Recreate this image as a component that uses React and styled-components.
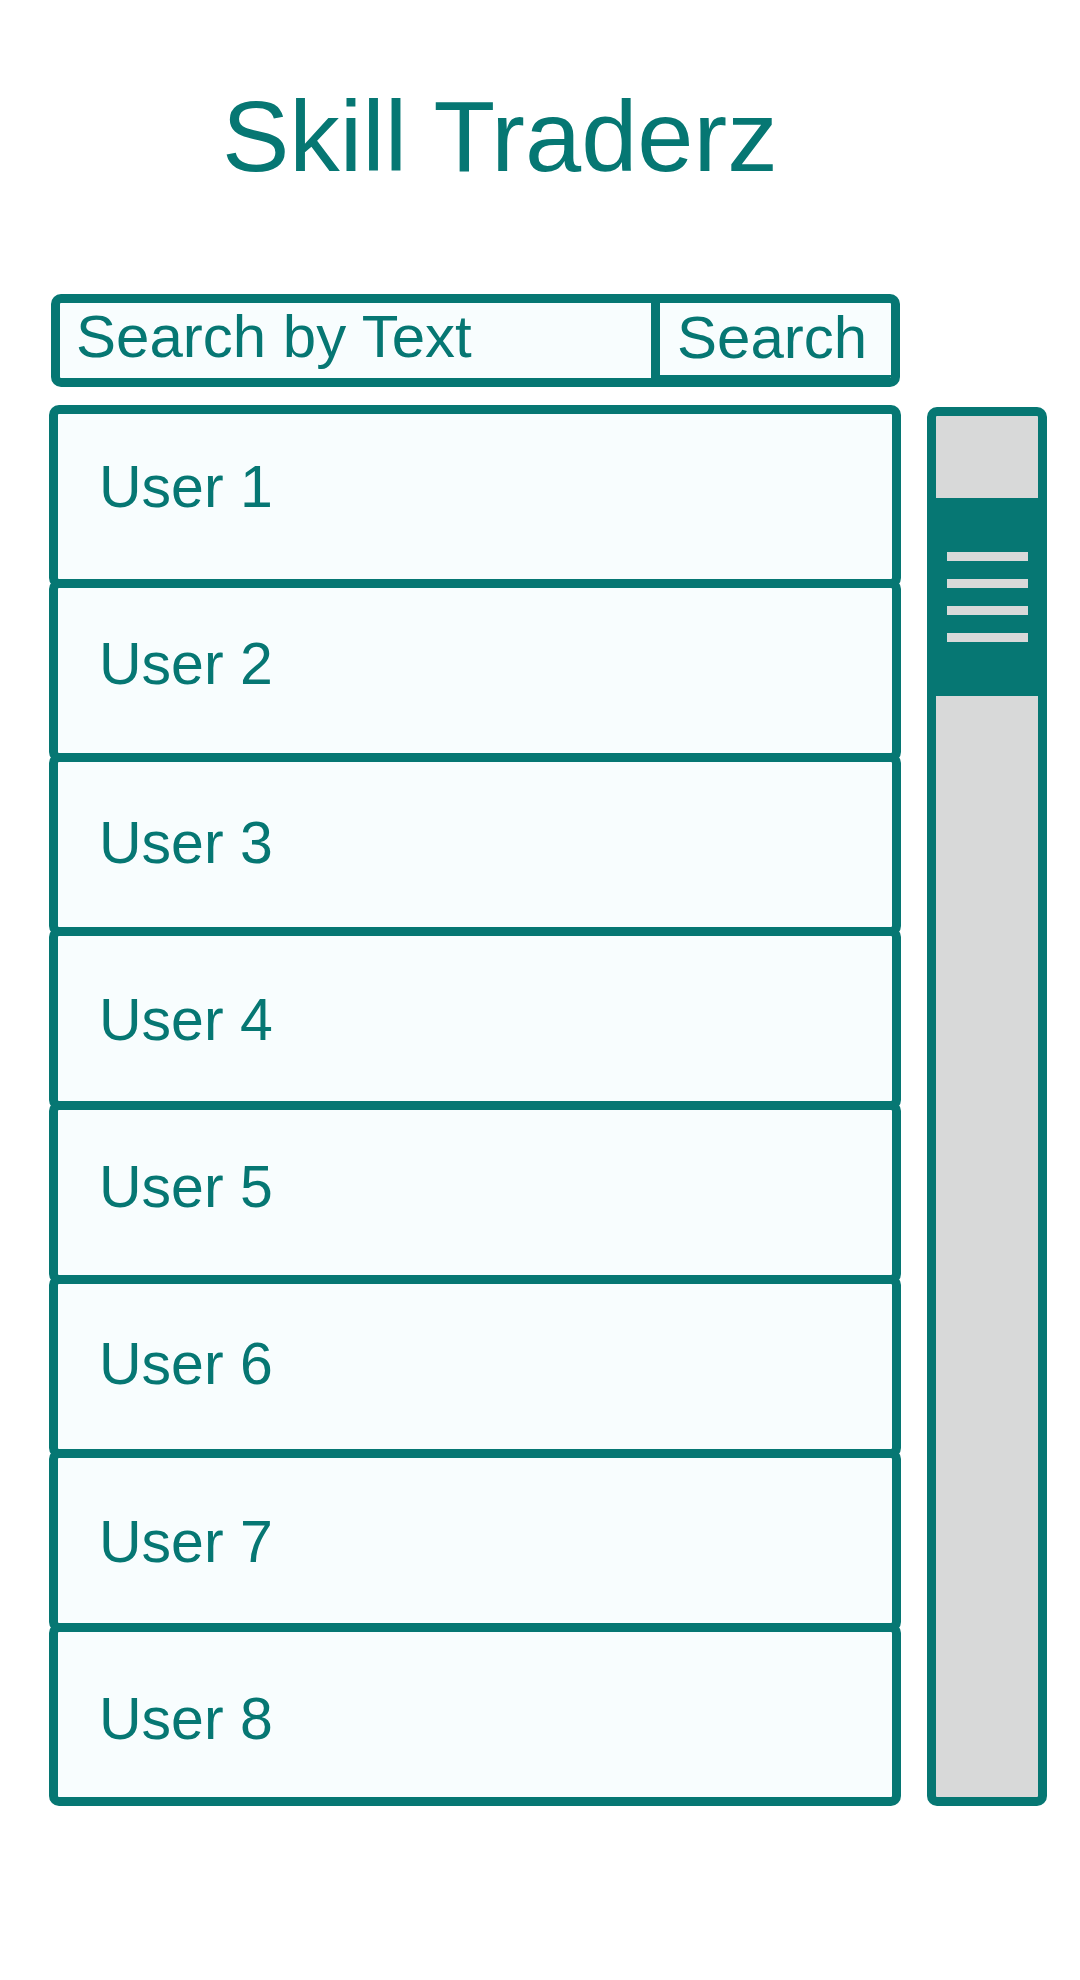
import React from "react";
import styled, { createGlobalStyle } from "styled-components";

const TEAL = "#067773";
const PANEL = "#f8fdfe";
const TRACK = "#d8d9d9";

const GlobalStyle = createGlobalStyle`
  html, body { margin: 0; padding: 0; background: #ffffff; }
  body { font-family: "Liberation Sans", Arial, sans-serif; color: ${TEAL}; }
  * { box-sizing: border-box; }
`;

const Page = styled.div`
  width: 1080px;
  min-height: 1980px;
  padding-top: 86px;
  display: flex;
  flex-direction: column;
`;

const Title = styled.h1`
  margin: 0;
  padding-left: 222px;
  font-size: 101px;
  line-height: 100px;
  font-weight: 400;
  color: ${TEAL};
`;

const SearchBar = styled.form`
  margin: 108px 0 0 51px;
  width: 849px;
  height: 93px;
  border: 9px solid ${TEAL};
  border-radius: 10px;
  background: ${PANEL};
  display: flex;
  overflow: hidden;
`;

const SearchInput = styled.input`
  flex: 1;
  min-width: 0;
  height: 100%;
  border: none;
  outline: none;
  background: transparent;
  padding: 0 0 8px 16px;
  font-family: "Liberation Sans", Arial, sans-serif;
  font-size: 60px;
  color: ${TEAL};
  &::placeholder { color: ${TEAL}; opacity: 1; }
`;

const SearchButton = styled.button`
  width: 240px;
  height: 100%;
  border: none;
  border-left: 9px solid ${TEAL};
  border-bottom: 3px solid ${TEAL};
  background: transparent;
  padding: 0 0 10px 17px;
  text-align: left;
  font-family: "Liberation Sans", Arial, sans-serif;
  font-size: 60px;
  color: ${TEAL};
  cursor: pointer;
`;

const Body = styled.div`
  margin: 18px 0 0 49px;
  display: flex;
  gap: 26px;
  align-items: stretch;
`;

const List = styled.ul`
  list-style: none;
  margin: 0;
  padding: 0;
  width: 852px;
  display: flex;
  flex-direction: column;
`;

const Row = styled.li`
  position: relative;
  height: 183px;
  border: 9px solid ${TEAL};
  border-radius: 10px;
  background: ${PANEL};
  & + & { margin-top: -9px; }
`;

const UserName = styled.span`
  display: block;
  padding: ${(p) => p.$top}px 0 0 41px;
  font-size: 59px;
  line-height: 58px;
  color: ${TEAL};
`;

const Scrollbar = styled.div`
  position: relative;
  width: 120px;
  margin-top: 2px;
  border: 9px solid ${TEAL};
  border-radius: 10px;
  background: ${TRACK};
`;

const Thumb = styled.div`
  position: absolute;
  left: -9px;
  right: -9px;
  height: 198px;
  background: ${TEAL};
  display: flex;
  flex-direction: column;
  align-items: center;
  justify-content: center;
  gap: 18px;
`;

const Grip = styled.span`
  display: block;
  width: 81px;
  height: 9px;
  background: ${TRACK};
`;

const users = [
  { name: "User 1", top: 44 },
  { name: "User 2", top: 47 },
  { name: "User 3", top: 52 },
  { name: "User 4", top: 55 },
  { name: "User 5", top: 48 },
  { name: "User 6", top: 51 },
  { name: "User 7", top: 55 },
  { name: "User 8", top: 58 },
];

export default function App() {
  return (
    <>
      <GlobalStyle />
      <Page>
        <Title>Skill Traderz</Title>
        <SearchBar onSubmit={(e) => e.preventDefault()}>
          <SearchInput type="text" placeholder="Search by Text" />
          <SearchButton type="submit">Search</SearchButton>
        </SearchBar>
        <Body>
          <List>
            {users.map((u) => (
              <Row key={u.name}>
                <UserName $top={u.top}>{u.name}</UserName>
              </Row>
            ))}
          </List>
          <Scrollbar>
            <Thumb style={{ top: 82 }}>
              <Grip />
              <Grip />
              <Grip />
              <Grip />
            </Thumb>
          </Scrollbar>
        </Body>
      </Page>
    </>
  );
}
